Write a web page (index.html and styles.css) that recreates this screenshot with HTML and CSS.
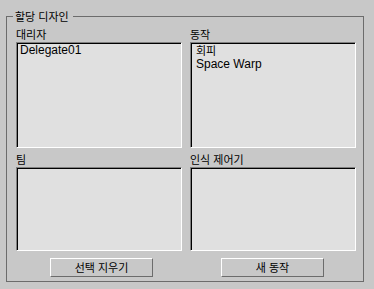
FILE: index.html
```html
<!DOCTYPE html>
<html lang="ko">
<head>
<meta charset="utf-8">
<link rel="stylesheet" href="styles.css">
</head>
<body>
<div class="group">
  <span class="title">할당 디자인</span>
  <div class="grid">
    <div class="cell">
      <div class="label">대리자</div>
      <div class="list tall"><div class="item">Delegate01</div></div>
    </div>
    <div class="cell">
      <div class="label">동작</div>
      <div class="list tall right"><div class="item ko">회피</div><div class="item next">Space Warp</div></div>
    </div>
    <div class="cell second">
      <div class="label">팀</div>
      <div class="list short"></div>
    </div>
    <div class="cell second">
      <div class="label">인식 제어기</div>
      <div class="list short"></div>
    </div>
  </div>
  <div class="buttons">
    <button class="btn btn-left">선택 지우기</button>
    <button class="btn btn-right">새 동작</button>
  </div>
</div>
</body>
</html>
```
FILE: styles.css
```css
html, body {
  margin: 0;
  padding: 0;
  background: #c8c8c8;
}
body {
  width: 374px;
  height: 289px;
  overflow: hidden;
  font-family: "Liberation Sans", "Noto Sans CJK KR", sans-serif;
  color: #000;
}
.group {
  position: relative;
  box-sizing: border-box;
  width: 358px;
  height: 266px;
  margin: 16px 0 0 6px;
  border: 1px solid #6c6c6c;
  padding: 9px 7px 0 9px;
}
.title {
  position: absolute;
  top: -8px;
  left: 6px;
  padding: 0 4px 0 2px;
  background: #c8c8c8;
  font-family: "Noto Sans CJK KR", sans-serif;
  font-size: 11px;
  line-height: 14px;
}
.grid {
  display: grid;
  grid-template-columns: 166px 166px;
  column-gap: 8px;
}
.cell.second {
  margin-top: 3px;
}
.label {
  height: 16px;
  line-height: 16px;
  font-family: "Noto Sans CJK KR", sans-serif;
  font-size: 11px;
}
.list {
  box-sizing: border-box;
  background: #e0e0e0;
  border: 1px solid;
  border-color: #808080 #ffffff #ffffff #808080;
  box-shadow: inset 1px 1px 0 #000;
  padding: 2px 2px 0 3px;
}
.list.right {
  padding-left: 5px;
}
.tall { height: 106px; }
.short { height: 84px; }
.item {
  font-size: 12px;
  line-height: 11px;
  white-space: nowrap;
}
.item.ko {
  font-size: 11px;
  line-height: 12px;
}
.item.next {
  line-height: 14px;
}
.buttons {
  display: flex;
  margin-top: 7px;
}
.btn {
  box-sizing: border-box;
  width: 103px;
  height: 19px;
  margin: 0;
  padding: 0;
  background: #c8c8c8;
  border: 1px solid;
  border-color: #ffffff #6c6c6c #6c6c6c #ffffff;
  font-family: "Noto Sans CJK KR", sans-serif;
  font-size: 11px;
  line-height: 17px;
  color: #000;
}
.btn-left { margin-left: 34px; }
.btn-right { margin-left: 68px; }
```
